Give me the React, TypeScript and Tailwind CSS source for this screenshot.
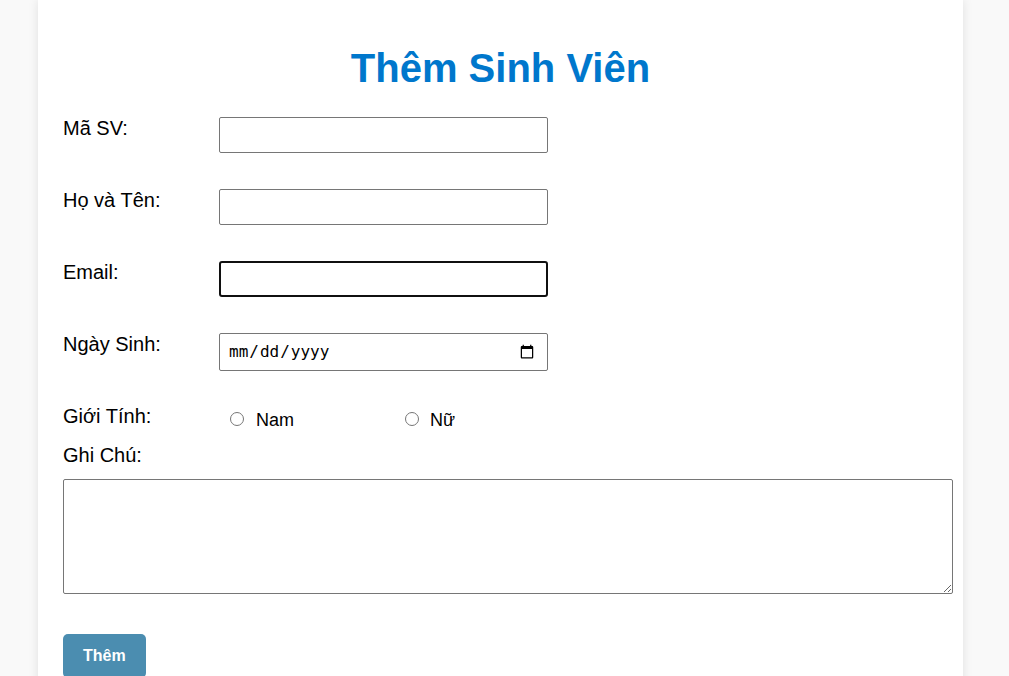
import React from 'react';

const App: React.FC = () => {
  return (
    <div className="min-h-screen bg-[#f9f9f9] font-['Liberation_Sans',Arial,sans-serif] text-black">
      <div className="ml-[38px] w-[925px] bg-white px-[25px] pt-[45px] pb-[40px] shadow-[0_0_10px_rgba(0,0,0,0.1)]">
        {/* Title */}
        <h1 className="text-center text-[40px] leading-[46px] font-bold text-[#0077cc]">Thêm Sinh Viên</h1>

        <form className="mt-[26px]" onSubmit={(e) => e.preventDefault()}>
          {/* Mã SV */}
          <div className="flex items-start mb-[36px]">
            <label className="w-[156px] text-[20px] leading-[23px] shrink-0">Mã SV:</label>
            <input type="text" className="w-[329px] h-[36px] border border-[#767676] rounded-[2px] px-2 text-[16px] bg-white" />
          </div>

          {/* Họ và Tên */}
          <div className="flex items-start mb-[36px]">
            <label className="w-[156px] text-[20px] leading-[23px] shrink-0">Họ và Tên:</label>
            <input type="text" className="w-[329px] h-[36px] border border-[#767676] rounded-[2px] px-2 text-[16px] bg-white" />
          </div>

          {/* Email (focused) */}
          <div className="flex items-start mb-[36px]">
            <label className="w-[156px] text-[20px] leading-[23px] shrink-0">Email:</label>
            <input type="email" className="w-[329px] h-[36px] border-2 border-[#101010] rounded-[3px] px-2 text-[16px] bg-white outline-none" />
          </div>

          {/* Ngày Sinh */}
          <div className="flex items-start mb-[34px]">
            <label className="w-[156px] text-[20px] leading-[23px] shrink-0">Ngày Sinh:</label>
            <input type="date" className="w-[329px] h-[38px] border border-[#767676] rounded-[2px] pl-2 pr-[10px] text-[16px] bg-white font-['DejaVu_Sans_Mono',monospace]" />
          </div>

          {/* Giới Tính */}
          <div className="flex items-start h-[39px]">
            <label className="w-[156px] text-[20px] leading-[23px] shrink-0">Giới Tính:</label>
            <div className="flex items-center mt-[5px] text-[18px] leading-[21px]">
              <input type="radio" name="gt" className="m-0 mb-[4px] ml-[11px] w-[14px] h-[14px]" />
              <label className="ml-[12px] w-[149px]">Nam</label>
              <input type="radio" name="gt" className="m-0 mb-[4px] w-[14px] h-[14px]" />
              <label className="ml-[11px]">Nữ</label>
            </div>
          </div>

          {/* Ghi Chú */}
          <label className="block text-[20px] leading-[23px] mb-[12px]">Ghi Chú:</label>
          <textarea className="block w-[890px] h-[115px] border border-[#767676] rounded-[2px] p-1 text-[16px] bg-white" />

          <button type="submit" className="mt-[40px] bg-[#4b8db0] text-white font-bold text-[16px] leading-[20px] px-[20px] py-[12px] rounded-[5px]">
            Thêm
          </button>
        </form>
      </div>
    </div>
  );
};

export default App;
